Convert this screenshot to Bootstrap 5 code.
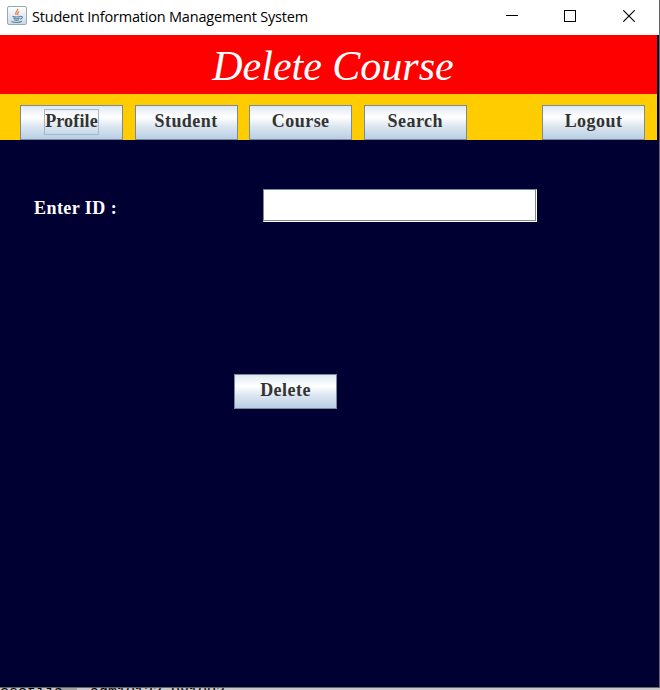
<!DOCTYPE html>
<html lang="en">
<head>
<meta charset="utf-8">
<title>Student Information Management System</title>
<link rel="stylesheet" href="https://cdn.jsdelivr.net/npm/bootstrap@5.3.0/dist/css/bootstrap.min.css">
<style>
body{width:660px;height:690px;background:#c8c8c8;font-family:"Liberation Serif",serif;overflow:hidden}
.app-window{width:660px;height:688px;background:#000033;border-right:1px solid #666;border-bottom:1px solid #666}
.title-bar{height:35px;background:#fff;padding-left:7px}
.title-text{font:14.5px/20px "Open Sans",sans-serif;letter-spacing:-.2px;color:#000;margin-left:5px;padding-bottom:1px}
.title-bar>svg{margin-bottom:3px}
.win-controls{gap:46px;margin-right:24px;padding-bottom:3px}
.banner{width:657px;height:59px;background:#f00}
.banner h1{font-size:42px;line-height:59px;font-style:italic;font-weight:400;color:#fff;padding:2px 0 0 9px}
.menu-strip{width:657px;height:46px;background:#fc0;padding:11px 12px 0 20px;gap:11.6px}
.swing-btn{width:103px;height:35px;border:1px solid #7a8a99;border-radius:0;padding:0 0 3px;background:linear-gradient(#dde8f3 0%,#fff 32%,#fff 34%,#dce6f0 62%,#b8cfe5 100%);font-size:18px;line-height:24px;font-weight:700;letter-spacing:.45px;color:#333!important}
.focus-box{border:1px solid #a3b8cc;height:26px;width:55px;letter-spacing:.15px;line-height:23px;margin-top:2px}
.form-area{padding:49px 0 0 34px}
.id-label{width:229px;font-size:18px;line-height:24px;font-weight:700;letter-spacing:.45px;color:#fff;padding-top:7px}
.id-input{width:274px;height:33px;border:1px solid #7a8a99;border-right-color:#fff;border-bottom-color:#fff;border-radius:0;box-shadow:inset -1px -1px #7a8a99!important;background:#fff;padding:2px}
.delete-row{padding:152px 0 0 234px}
.console-line{height:2px;font:15px/17px "Liberation Mono",monospace;color:#000;white-space:pre;overflow:hidden;background:linear-gradient(#a0a0a0,#a0a0a0) 58px 0/19px 2px no-repeat}
.console-line span{display:block;margin-top:-4px}
</style>
</head>
<body>
<main class="app-window">
<header class="title-bar d-flex align-items-center">
<svg width="20" height="20" viewBox="0 0 20 20"><defs><linearGradient id="g" x2="0" y2="1"><stop stop-color="#fff"/><stop offset="1" stop-color="#ccd9e4"/></linearGradient></defs><rect x=".5" y=".5" width="19" height="18" rx="1.5" fill="url(#g)" stroke="#9aa8b5"/><path d="M10.5 2.8c1.5 2-3.6 3-1.2 6M12.3 5.5c-2.5 1.1-1.8 2-1.3 3.6" fill="none" stroke="#e8854b" stroke-width="1.3"/><path d="M5.5 10.2c2 .8 6 .8 8-.1M6.3 12c2 .8 5 .7 6.5 0M7 13.8c1.5.7 3.7.6 5 0M4.5 15.5c2.8 1.3 8 1.3 10.4-.2M13.5 10.5c3-.4 2 2.3-.5 2.6" fill="none" stroke="#5482a5" stroke-width="1.1"/></svg>
<div class="title-text text-nowrap">Student Information Management System</div>
<div class="win-controls d-flex ms-auto">
<svg width="12" height="12" shape-rendering="crispEdges"><path d="M0 5.5h12" stroke="#000"/></svg>
<svg width="12" height="12" shape-rendering="crispEdges"><rect x=".5" y=".5" width="11" height="11" fill="none" stroke="#000"/></svg>
<svg width="13" height="12"><path d="M1.3.3l11.4 11.4M12.7.3L1.3 11.7" stroke="#000" stroke-width="1.1"/></svg>
</div>
</header>
<div class="banner"><h1 class="m-0 text-center">Delete Course</h1></div>
<nav class="menu-strip d-flex">
<button class="btn swing-btn d-flex justify-content-center align-items-center"><span class="focus-box">Profile</span></button>
<button class="btn swing-btn">Student</button>
<button class="btn swing-btn">Course</button>
<button class="btn swing-btn">Search</button>
<button class="btn swing-btn ms-auto">Logout</button>
</nav>
<form class="form-area d-flex">
<label class="id-label" for="cid">Enter ID :</label>
<input id="cid" class="form-control id-input" type="text">
</form>
<div class="delete-row"><button class="btn swing-btn d-block" type="button">Delete</button></div>
</main>
<div class="console-line"><span>esetija   adm10123 981003</span></div>
<script src="https://cdn.jsdelivr.net/npm/bootstrap@5.3.0/dist/js/bootstrap.bundle.min.js"></script>
</body>
</html>
